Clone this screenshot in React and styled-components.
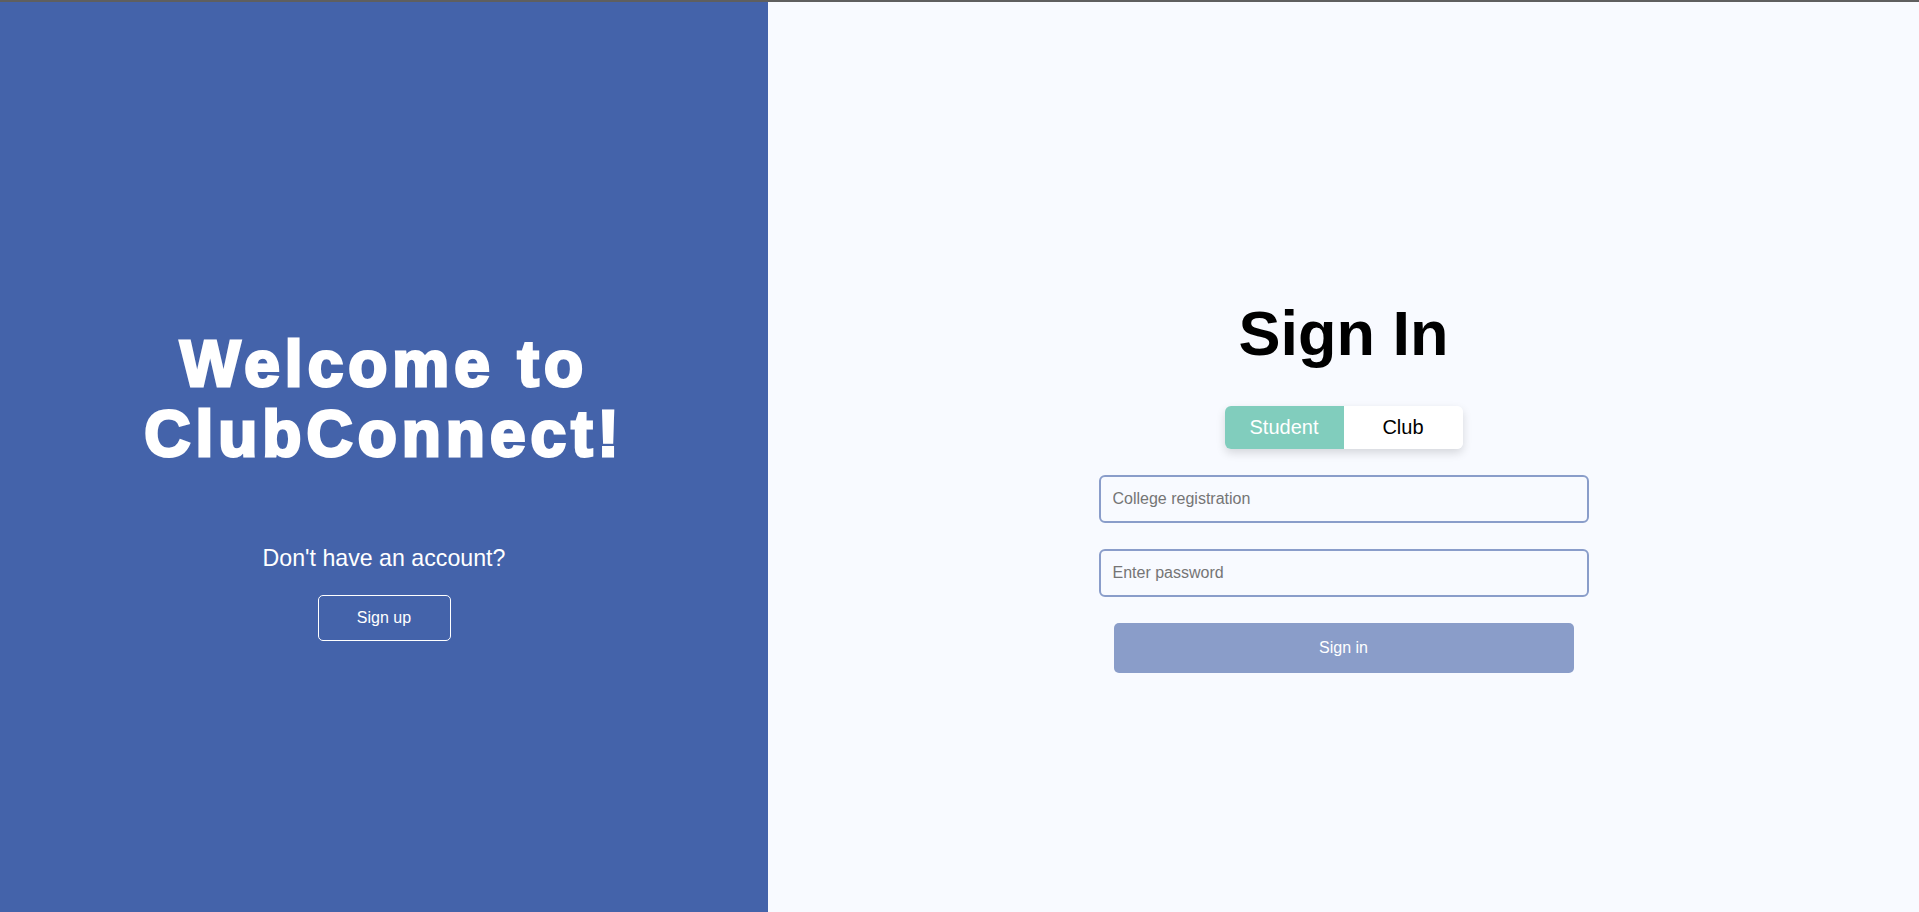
import React, { useState } from "react";
import styled, { createGlobalStyle } from "styled-components";

const GlobalStyle = createGlobalStyle`
  html, body {
    margin: 0;
    padding: 0;
    height: 100%;
  }
  body {
    font-family: "Liberation Sans", Arial, sans-serif;
    background: #f8faff;
  }
  * {
    box-sizing: border-box;
  }
`;

const Page = styled.div`
  display: flex;
  flex-direction: column;
  height: 912px;
  border-top: 2px solid #5f5f5f;
`;

const Split = styled.div`
  flex: 1;
  display: grid;
  grid-template-columns: 768px 1fr;
`;

const Panel = styled.section`
  display: flex;
  flex-direction: column;
  align-items: center;
  justify-content: center;
  padding-top: 56px;
  background: ${(p) => (p.$dark ? "#4463aa" : "#f8faff")};
  color: ${(p) => (p.$dark ? "#ffffff" : "#000000")};
`;

const Welcome = styled.h1`
  margin: 0;
  font-size: 64px;
  line-height: 1.1;
  font-weight: 900;
  letter-spacing: 5px;
  text-align: center;
  -webkit-text-stroke: 3px #ffffff;
`;

const Prompt = styled.p`
  margin: 75px 0 0;
  font-size: 23.2px;
  line-height: 1.15;
`;

const OutlineButton = styled.button`
  margin-top: 24px;
  width: 133px;
  height: 46px;
  background: transparent;
  border: 1px solid #ffffff;
  border-radius: 5px;
  color: #ffffff;
  font-family: inherit;
  font-size: 16px;
  cursor: pointer;
`;

const Title = styled.h1`
  margin: 0;
  font-size: 63px;
  line-height: 1.15;
  font-weight: 700;
`;

const Toggle = styled.div`
  display: flex;
  margin-top: 36px;
  border-radius: 6px;
  overflow: hidden;
  box-shadow: 0 4px 10px rgba(0, 0, 0, 0.14);
`;

const ToggleOption = styled.button`
  width: 119px;
  height: 43px;
  border: none;
  font-family: inherit;
  font-size: 20px;
  cursor: pointer;
  background: ${(p) => (p.$active ? "#81cdbd" : "#ffffff")};
  color: ${(p) => (p.$active ? "#ffffff" : "#000000")};
`;

const Form = styled.form`
  display: flex;
  flex-direction: column;
  align-items: center;
  gap: 26px;
  margin-top: 26px;
`;

const Input = styled.input`
  width: 490px;
  height: 48px;
  padding: 0 12px;
  border: 2px solid #8a9dca;
  border-radius: 6px;
  background: transparent;
  font-family: inherit;
  font-size: 16px;
  outline: none;

  &::placeholder {
    color: #757575;
  }
`;

const SubmitButton = styled.button`
  width: 460px;
  height: 50px;
  border: none;
  border-radius: 5px;
  background: #8a9dc9;
  color: #ffffff;
  font-family: inherit;
  font-size: 16px;
  cursor: pointer;
`;

const App = () => {
  const [role, setRole] = useState("student");
  const [registration, setRegistration] = useState("");
  const [password, setPassword] = useState("");

  const handleSubmit = (e) => {
    e.preventDefault();
  };

  return (
    <Page>
      <GlobalStyle />
      <Split>
        <Panel $dark>
          <Welcome>
            Welcome to
            <br />
            ClubConnect!
          </Welcome>
          <Prompt>Don't have an account?</Prompt>
          <OutlineButton type="button">Sign up</OutlineButton>
        </Panel>
        <Panel>
          <Title>Sign In</Title>
          <Toggle>
            <ToggleOption
              type="button"
              $active={role === "student"}
              onClick={() => setRole("student")}
            >
              Student
            </ToggleOption>
            <ToggleOption
              type="button"
              $active={role === "club"}
              onClick={() => setRole("club")}
            >
              Club
            </ToggleOption>
          </Toggle>
          <Form onSubmit={handleSubmit}>
            <Input
              placeholder={role === "student" ? "College registration" : "Club ID"}
              value={registration}
              onChange={(e) => setRegistration(e.target.value)}
            />
            <Input
              type="password"
              placeholder="Enter password"
              value={password}
              onChange={(e) => setPassword(e.target.value)}
            />
            <SubmitButton type="submit">Sign in</SubmitButton>
          </Form>
        </Panel>
      </Split>
    </Page>
  );
};

export default App;
